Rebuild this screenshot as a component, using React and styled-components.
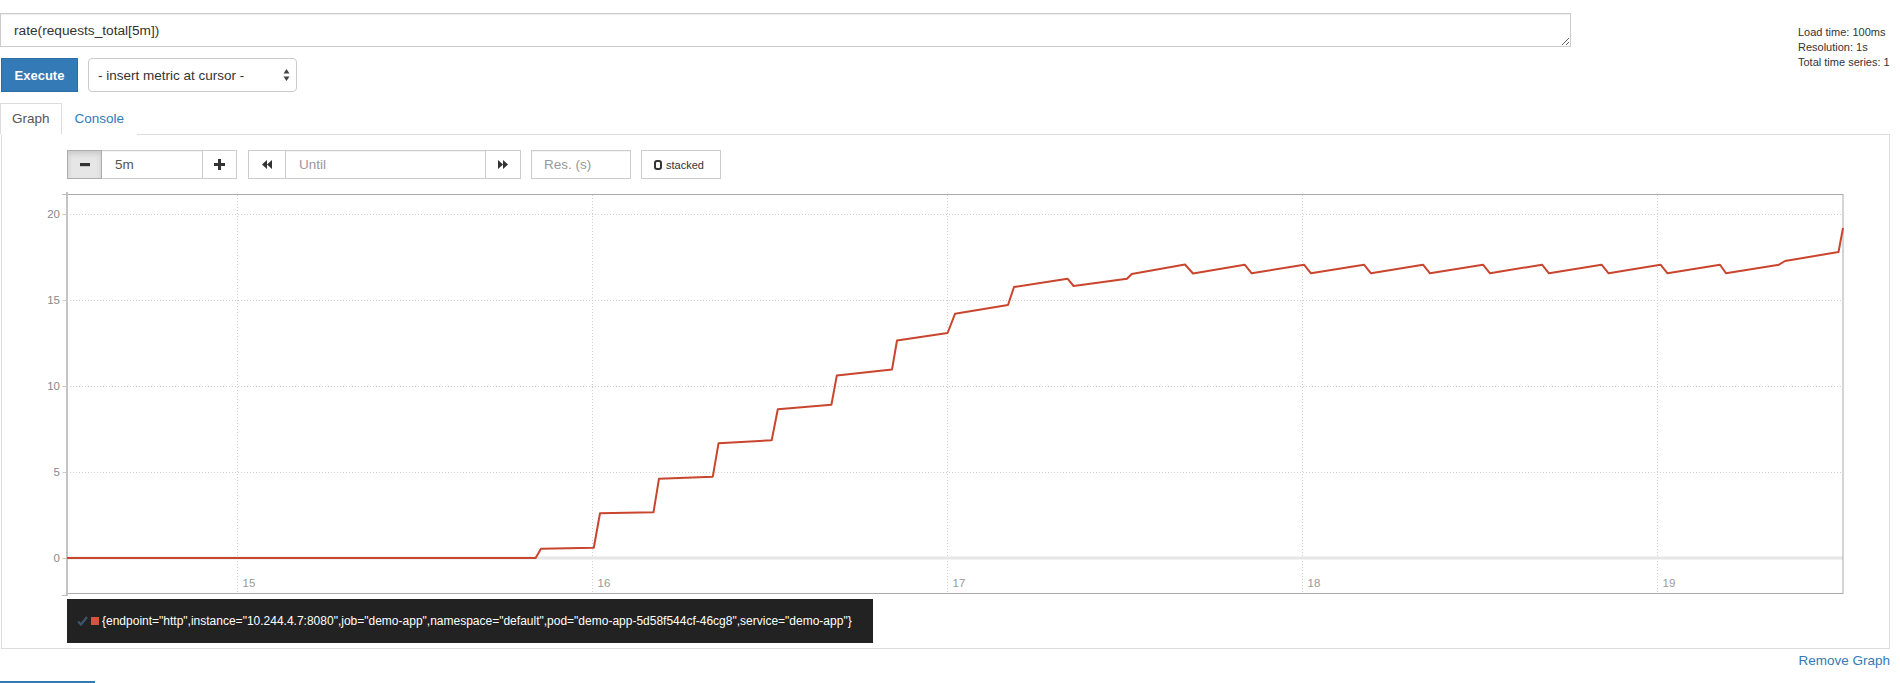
import React from 'react'
import styled, { createGlobalStyle } from 'styled-components'

const points = [
  [67, 558], [535.6, 558], [541, 548.7], [593.8, 547.7], [600, 513.3], [653.5, 512.3],
  [659, 478.7], [712.8, 476.7], [718.5, 443.3], [771.7, 440.3], [777.8, 409.3], [831.4, 404.7],
  [836.8, 375.6], [892, 369.6], [897, 340.5], [947.6, 333], [955, 313.8], [1008, 305],
  [1014, 287], [1067.5, 278.7], [1073.6, 286], [1127, 278.7], [1131.7, 274], [1185, 264.5],
  [1193, 273.5], [1244.7, 264.7], [1251.7, 273.3], [1304, 264.7], [1311, 273.3], [1364, 264.7],
  [1371, 273.3], [1423, 264.7], [1430, 273.3], [1483, 264.7], [1490, 273.3], [1542, 264.7],
  [1549, 273.3], [1601.6, 264.7], [1608.6, 273.3], [1660.5, 264.7], [1667.5, 273.3], [1720, 264.7],
  [1726, 273.3], [1779, 264.7], [1785, 261], [1838.5, 252], [1843, 228],
]

const yTicks = [20, 15, 10, 5, 0]
const xTicks = [15, 16, 17, 18, 19]
const yOf = (v) => 558 - v * 17.2
const xOf = (t) => 237.5 + (t - 15) * 355

const labels = '{endpoint="http",instance="10.244.4.7:8080",job="demo-app",namespace="default",pod="demo-app-5d58f544cf-46cg8",service="demo-app"}'

function Chart() {
  return (
    <ChartSvg width="1857" height="414" viewBox="17 185 1857 414">
      {yTicks.slice(0, 4).map((v) => (
        <line key={v} x1="67" x2="1843" y1={yOf(v) + 0.5} y2={yOf(v) + 0.5} stroke="#cfcfcf" strokeDasharray="1 2" />
      ))}
      {xTicks.map((t) => (
        <line key={t} x1={xOf(t)} x2={xOf(t)} y1="195" y2="593" stroke="#cfcfcf" strokeDasharray="1 2" />
      ))}
      <line x1="68" x2="1843" y1="558" y2="558" stroke="#e6e6e6" strokeWidth="3" />
      <rect x="67.5" y="194.5" width="1775.5" height="399" fill="none" stroke="#aaa" />
      <line x1="67" x2="67" y1="192" y2="596" stroke="#c4c4c4" strokeWidth="2" />
      <line x1="62" x2="67" y1="194.5" y2="194.5" stroke="#bbb" />
      <line x1="62" x2="67" y1="595.5" y2="595.5" stroke="#bbb" />
      {yTicks.map((v) => (
        <g key={v}>
          <line x1="62.5" x2="66" y1={yOf(v) + 0.5} y2={yOf(v) + 0.5} stroke="#ccc" />
          <AxisText x="60" y={yOf(v) + 4} textAnchor="end">{v}</AxisText>
        </g>
      ))}
      {xTicks.map((t) => (
        <AxisText key={t} x={xOf(t) + 5} y="587" $light>{t}</AxisText>
      ))}
      <polyline
        points={points.map((p) => p.join(',')).join(' ')}
        fill="none"
        stroke="#c9452d"
        strokeWidth="2"
        strokeLinejoin="round"
      />
    </ChartSvg>
  )
}

function App() {
  return (
    <Page>
      <GlobalStyle />
      <TopRow>
        <QueryColumn>
          <QueryInput defaultValue="rate(requests_total[5m])" spellCheck={false} />
          <ActionRow>
            <ExecuteButton>Execute</ExecuteButton>
            <MetricSelect>
              <span>- insert metric at cursor -</span>
              <svg width="7" height="14" viewBox="0 0 7 14">
                <path d="M3.5 1 L6.5 5.5 L0.5 5.5 Z M3.5 13 L6.5 8.5 L0.5 8.5 Z" fill="#444" />
              </svg>
            </MetricSelect>
          </ActionRow>
        </QueryColumn>
        <Stats>
          <div>Load time: 100ms</div>
          <div>Resolution: 1s</div>
          <div>Total time series: 1</div>
        </Stats>
      </TopRow>

      <Tabs>
        <Tab $active>Graph</Tab>
        <Tab>Console</Tab>
      </Tabs>

      <Panel>
        <Controls>
          <Group $gapAfter>
            <ControlButton $width={35} $pressed>
              <svg width="10" height="4" viewBox="0 0 10 4"><rect width="10" height="3.2" fill="#333" /></svg>
            </ControlButton>
            <ControlInput $width={100} $joined defaultValue="5m" />
            <ControlButton $width={35}>
              <svg width="11" height="11" viewBox="0 0 11 11">
                <rect x="4" width="3" height="11" fill="#333" />
                <rect y="4" width="11" height="3" fill="#333" />
              </svg>
            </ControlButton>
          </Group>
          <Group>
            <ControlButton $width={38}>
              <svg width="10" height="9" viewBox="0 0 10 9">
                <path d="M0 4.5 L5 0 V9 Z M5 4.5 L10 0 V9 Z" fill="#333" />
              </svg>
            </ControlButton>
            <ControlInput $width={199} $joined placeholder="Until" />
            <ControlButton $width={36}>
              <svg width="10" height="9" viewBox="0 0 10 9">
                <path d="M10 4.5 L5 0 V9 Z M5 4.5 L0 0 V9 Z" fill="#333" />
              </svg>
            </ControlButton>
          </Group>
          <ControlInput $width={100} placeholder="Res. (s)" />
          <StackedButton>
            <Ring />
            stacked
          </StackedButton>
        </Controls>

        <Chart />

        <Legend>
          <svg width="11" height="10" viewBox="0 0 11 10">
            <path d="M1 5.5 L4 8.5 L10 1" fill="none" stroke="#3b5670" strokeWidth="2.2" />
          </svg>
          <Swatch />
          <LegendLabel>{labels}</LegendLabel>
        </Legend>
      </Panel>

      <RemoveRow>
        <LinkText>Remove Graph</LinkText>
      </RemoveRow>
      <AddButton aria-label="Add Graph" />
    </Page>
  )
}

const GlobalStyle = createGlobalStyle`
  html, body {
    margin: 0;
    padding: 0;
    background: #fff;
  }
  body {
    font-family: "Liberation Sans", Arial, sans-serif;
    color: #333;
    width: 1900px;
    height: 683px;
    overflow: hidden;
  }
  * {
    box-sizing: border-box;
  }
`

const Page = styled.div`
  padding-top: 13px;
  width: 1900px;
`

const TopRow = styled.div`
  display: flex;
`

const QueryColumn = styled.div`
  width: 1571px;
  display: flex;
  flex-direction: column;
  gap: 11px;
`

const QueryInput = styled.textarea`
  display: block;
  width: 1571px;
  height: 34px;
  margin: 0;
  border: 1px solid #ccc;
  padding: 8px 13px 0;
  font-family: "Liberation Sans", Arial, sans-serif;
  font-size: 13.7px;
  line-height: 17px;
  color: #333;
  box-shadow: inset 0 1px 1px rgba(0, 0, 0, 0.075);
  outline: none;
`

const ActionRow = styled.div`
  display: flex;
  gap: 10px;
  height: 34px;
`

const ExecuteButton = styled.button`
  margin-left: 1px;
  width: 77px;
  height: 34px;
  background: #337ab7;
  border: 1px solid #2e6da4;
  color: #fff;
  font-family: "Liberation Sans", Arial, sans-serif;
  font-size: 13px;
  font-weight: 700;
  padding: 0;
`

const MetricSelect = styled.div`
  width: 209px;
  height: 34px;
  border: 1px solid #ccc;
  border-radius: 4px;
  padding: 0 6px 0 9px;
  display: flex;
  align-items: center;
  justify-content: space-between;
  font-size: 13.5px;
  color: #333;
`

const Stats = styled.div`
  padding-top: 12px;
  padding-left: 227px;
  font-size: 11px;
  line-height: 15px;
  color: #333;
  white-space: nowrap;
`

const Tabs = styled.div`
  margin-top: 11px;
  display: flex;
  height: 31px;
`

const Tab = styled.div`
  position: relative;
  z-index: 1;
  height: 32px;
  line-height: 30px;
  padding: 0 ${(p) => (p.$active ? 11 : 12)}px;
  border: 1px solid ${(p) => (p.$active ? '#ddd' : 'transparent')};
  border-bottom-color: ${(p) => (p.$active ? '#fff' : 'transparent')};
  background: #fff;
  font-size: 13.5px;
  color: ${(p) => (p.$active ? '#555' : '#337ab7')};
`

const Panel = styled.div`
  margin-left: 1px;
  width: 1889px;
  border: 1px solid #ddd;
  padding: 15px 15px 5px;
`

const Controls = styled.div`
  display: flex;
  gap: 10px;
  height: 29px;
  margin-left: 50px;
  margin-bottom: 6px;
`

const Group = styled.div`
  display: flex;
  margin-right: ${(p) => (p.$gapAfter ? 1 : 0)}px;
`

const ControlButton = styled.div`
  width: ${(p) => p.$width}px;
  height: 29px;
  display: flex;
  align-items: center;
  justify-content: center;
  background: ${(p) => (p.$pressed ? '#e6e6e6' : '#fff')};
  border: 1px solid ${(p) => (p.$pressed ? '#adadad' : '#ccc')};
  box-shadow: ${(p) => (p.$pressed ? 'inset 0 3px 5px rgba(0, 0, 0, 0.125)' : 'none')};
`

const ControlInput = styled.input`
  width: ${(p) => p.$width}px;
  height: 29px;
  margin: 0;
  border: 1px solid #ccc;
  border-left-width: ${(p) => (p.$joined ? 0 : 1)}px;
  border-right-width: ${(p) => (p.$joined ? 0 : 1)}px;
  padding: 0 0 0 ${(p) => (p.$joined ? 13 : 12)}px;
  font-family: "Liberation Sans", Arial, sans-serif;
  font-size: 13.5px;
  color: #555;
  outline: none;
  box-shadow: inset 0 1px 1px rgba(0, 0, 0, 0.05);
  &::placeholder {
    color: #999;
  }
`

const StackedButton = styled.div`
  width: 80px;
  height: 29px;
  border: 1px solid #ccc;
  display: flex;
  align-items: center;
  padding-left: 12px;
  gap: 4px;
  font-size: 11px;
  color: #333;
`

const Ring = styled.span`
  width: 8px;
  height: 10px;
  border: 2px solid #333;
  border-radius: 3px;
`

const ChartSvg = styled.svg`
  display: block;
`

const AxisText = styled.text`
  font-family: "Liberation Sans", Arial, sans-serif;
  font-size: 11.5px;
  fill: ${(p) => (p.$light ? '#9a9a9a' : '#868a90')};
`

const Legend = styled.div`
  margin-left: 50px;
  width: max-content;
  height: 44px;
  background: #222;
  display: flex;
  align-items: center;
  padding: 0 21px 0 10px;
`

const Swatch = styled.span`
  width: 8px;
  height: 8px;
  margin-left: 3px;
  background: #d4553d;
`

const LegendLabel = styled.span`
  margin-left: 3px;
  font-size: 12px;
  color: #fff;
  white-space: nowrap;
`

const RemoveRow = styled.div`
  width: 1890px;
  margin-top: 1px;
  text-align: right;
  line-height: 20px;
`

const LinkText = styled.span`
  font-size: 13.5px;
  color: #337ab7;
`

const AddButton = styled.div`
  margin-top: 10px;
  width: 95px;
  height: 34px;
  background: #337ab7;
`

export default App
